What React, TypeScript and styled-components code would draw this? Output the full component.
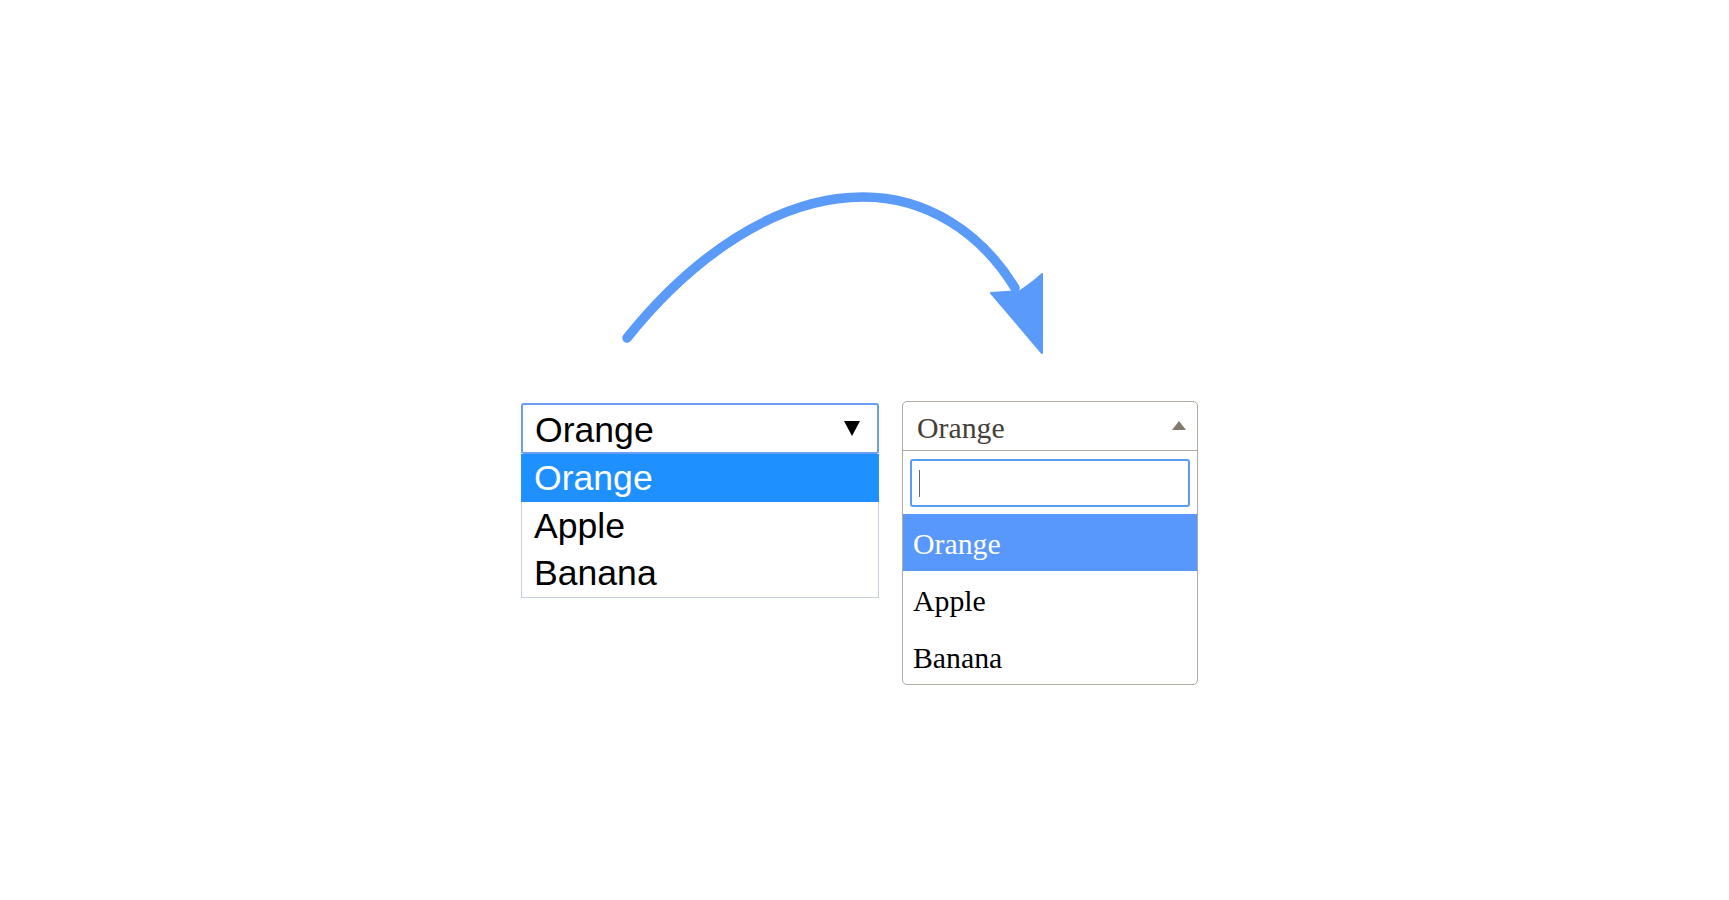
import React from "react";
import styled, { createGlobalStyle } from "styled-components";

const Global = createGlobalStyle`
  html, body { margin: 0; padding: 0; background: #ffffff; }
  body { font-family: "Liberation Sans", Arial, sans-serif; }
`;

const Stage = styled.div`
  width: 1729px;
  height: 900px;
  padding: 170px 0 0 521px;
  box-sizing: border-box;
  display: flex;
  flex-direction: column;
  align-items: flex-start;
`;

const ArrowArt = styled.svg`
  display: block;
  width: 677px;
  height: 231px;
`;

const Row = styled.div`
  display: flex;
  align-items: flex-start;
  gap: 23px;
`;

/* ---------- native-looking select (left) ---------- */
const NativeSelect = styled.div`
  width: 358px;
  margin-top: 2px;
  font-family: "Liberation Sans", Arial, sans-serif;
  font-size: 35.6px;
  color: #000;
`;

const NativeHeader = styled.div`
  height: 51px;
  box-sizing: border-box;
  border: 2px solid #6a9ef5;
  border-radius: 3px;
  display: flex;
  align-items: center;
  justify-content: space-between;
  padding: 2px 17px 0 12px;
  line-height: 40px;
`;

const DownTriangle = styled.span`
  width: 0;
  height: 0;
  border-left: 8.5px solid transparent;
  border-right: 8.5px solid transparent;
  border-top: 15px solid #000;
  margin-top: -2px;
`;

const NativeList = styled.div`
  border: 1px solid #c6d0de;
  border-top: none;
`;

const NativeOption = styled.div<{ $active?: boolean }>`
  height: 47.5px;
  box-sizing: border-box;
  padding: 4px 12px 3px 12px;
  line-height: 40.5px;
  background: ${(p) => (p.$active ? "#1e90ff" : "transparent")};
  color: ${(p) => (p.$active ? "#ffffff" : "#000000")};
  margin: ${(p) => (p.$active ? "0 -1px" : "0")};
  padding-left: ${(p) => (p.$active ? "13px" : "12px")};
`;

/* ---------- select2-looking select (right) ---------- */
const FancySelect = styled.div`
  width: 296px;
  height: 284px;
  box-sizing: border-box;
  border: 1px solid #b0aaa3;
  border-radius: 5px;
  overflow: hidden;
  font-family: "Liberation Serif", "Times New Roman", serif;
  font-size: 29.8px;
  background: #fff;
`;

const FancyHeader = styled.div`
  height: 49px;
  box-sizing: border-box;
  border-bottom: 1px solid #b0aaa3;
  display: flex;
  align-items: center;
  justify-content: space-between;
  padding: 3px 11px 0 14px;
  color: #463f38;
  line-height: 33px;
`;

const UpTriangle = styled.span`
  width: 0;
  height: 0;
  border-left: 7px solid transparent;
  border-right: 7px solid transparent;
  border-bottom: 9px solid #847a6c;
  margin-top: -5px;
`;

const SearchWrap = styled.div`
  padding: 8px 7px 7px 7px;
`;

const SearchBox = styled.div`
  height: 48px;
  box-sizing: border-box;
  border: 2px solid #5b9bf5;
  border-radius: 3px;
  display: flex;
  align-items: center;
  padding-left: 7px;
`;

const TextCaret = styled.span`
  display: block;
  width: 1px;
  height: 27px;
  background: #6e655c;
`;

const FancyOption = styled.div<{ $active?: boolean }>`
  height: 57px;
  box-sizing: border-box;
  padding: 13px 10px 11px 10px;
  line-height: 33px;
  background: ${(p) => (p.$active ? "#5897fb" : "transparent")};
  color: ${(p) => (p.$active ? "#ffffff" : "#000000")};
`;

const fruits = ["Orange", "Apple", "Banana"];

export default function App() {
  return (
    <>
      <Global />
      <Stage>
        <ArrowArt viewBox="0 0 677 231">
          <path
            d="M106 168 C170 88 255 27 342 27 C405 27 460 62 494 118"
            fill="none"
            stroke="#5a9af8"
            strokeWidth={9.5}
            strokeLinecap="round"
          />
          <path
            d="M470 123 L499 121 Q513 112 521 104 L521 183 Z"
            fill="#5a9af8"
            stroke="#5a9af8"
            strokeWidth={2}
            strokeLinejoin="round"
          />
        </ArrowArt>
        <Row>
          <NativeSelect>
            <NativeHeader>
              <span>Orange</span>
              <DownTriangle />
            </NativeHeader>
            <NativeList>
              {fruits.map((f, i) => (
                <NativeOption key={f} $active={i === 0}>
                  {f}
                </NativeOption>
              ))}
            </NativeList>
          </NativeSelect>
          <FancySelect>
            <FancyHeader>
              <span>Orange</span>
              <UpTriangle />
            </FancyHeader>
            <SearchWrap>
              <SearchBox>
                <TextCaret />
              </SearchBox>
            </SearchWrap>
            {fruits.map((f, i) => (
              <FancyOption key={f} $active={i === 0}>
                {f}
              </FancyOption>
            ))}
          </FancySelect>
        </Row>
      </Stage>
    </>
  );
}
